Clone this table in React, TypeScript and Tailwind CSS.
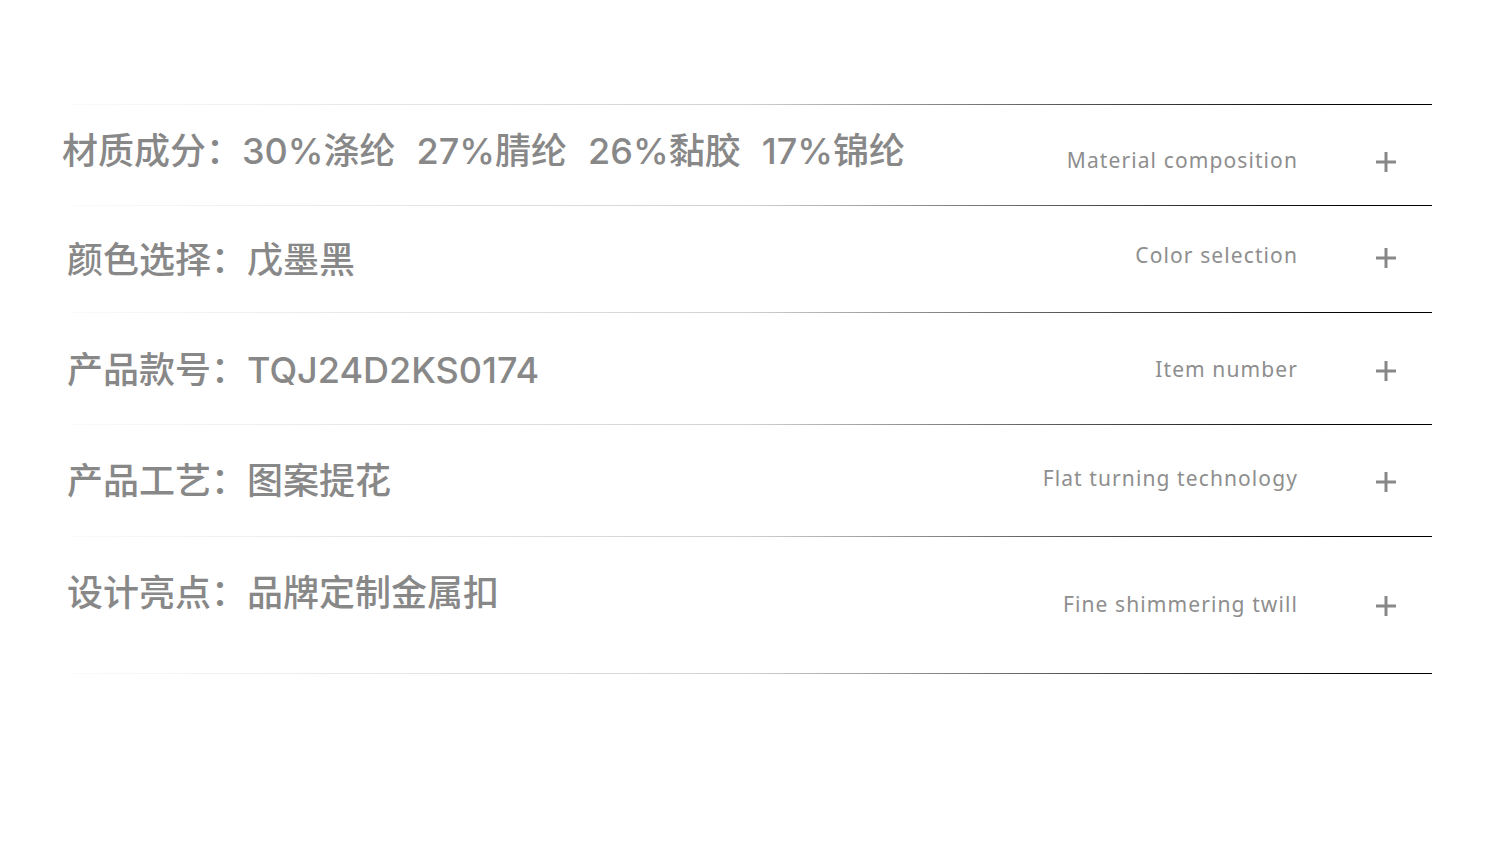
import React from "react";

const Line = () => (
  <div className="ml-[70px] h-px w-[1362px] bg-gradient-to-r from-[#fbfbfb] via-[#d0d0d0] via-50% to-[#000]" />
);

type Row = {
  h: string;
  label: string;
  values: string[];
  en: string;
  leftPad: string;
  leftMt: string;
  rightMt: string;
  plusMt: string;
};

const rows: Row[] = [
  { h: "h-[100px]", label: "材质成分：", values: ["30%涤纶", "27%腈纶", "26%黏胶", "17%锦纶"], en: "Material composition", leftPad: "pl-[62px]", leftMt: "mt-[28px]", rightMt: "mt-[45px]", plusMt: "mt-[47px]" },
  { h: "h-[106px]", label: "颜色选择：", values: ["戊墨黑"], en: "Color selection", leftPad: "pl-[67px]", leftMt: "mt-[36px]", rightMt: "mt-[39px]", plusMt: "mt-[42px]" },
  { h: "h-[111px]", label: "产品款号：", values: ["TQJ24D2KS0174"], en: "Item number", leftPad: "pl-[67px]", leftMt: "mt-[39px]", rightMt: "mt-[46px]", plusMt: "mt-[48px]" },
  { h: "h-[111px]", label: "产品工艺：", values: ["图案提花"], en: "Flat turning technology", leftPad: "pl-[67px]", leftMt: "mt-[38px]", rightMt: "mt-[43px]", plusMt: "mt-[47px]" },
  { h: "h-[136px]", label: "设计亮点：", values: ["品牌定制金属扣"], en: "Fine shimmering twill", leftPad: "pl-[67px]", leftMt: "mt-[38px]", rightMt: "mt-[57px]", plusMt: "mt-[59px]" },
];

const Plus = () => (
  <svg width="20" height="20" viewBox="0 0 20 20">
    <rect x="0" y="8.5" width="20" height="3" fill="#888888" />
    <rect x="8.5" y="0" width="3" height="20" fill="#888888" />
  </svg>
);

export default function App() {
  return (
    <div className="w-[1500px] h-[863px] bg-white pt-[104px]" style={{ fontFamily: 'Inter, "Noto Sans CJK SC", sans-serif' }}>
      {rows.map((r, i) => (
        <div key={i}>
          <Line />
          <div className={`flex items-start ${r.h}`}>
            <div className={`flex-1 ${r.leftPad} ${r.leftMt} flex items-center text-[36px] leading-none font-medium text-[#888888] whitespace-nowrap`}>
              <span>{r.label}</span>
              <span className="flex gap-[21px]">
                {r.values.map((v) => (
                  <span key={v}>{v}</span>
                ))}
              </span>
            </div>
            <div className={`${r.rightMt} text-[21px] leading-none tracking-[1.1px] text-[#8e8e8e] whitespace-nowrap`} style={{ fontFamily: '"Noto Sans", sans-serif' }}>
              {r.en}
            </div>
            <div className={`${r.plusMt} ml-[78px] mr-[104px]`}>
              <Plus />
            </div>
          </div>
        </div>
      ))}
      <Line />
    </div>
  );
}
